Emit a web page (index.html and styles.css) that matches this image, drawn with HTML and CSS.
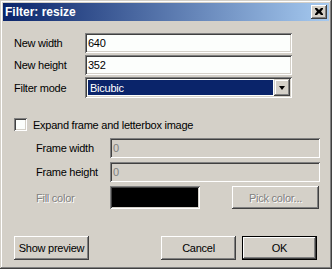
FILE: index.html
```html
<!DOCTYPE html>
<html>
<head>
<meta charset="utf-8">
<link rel="stylesheet" href="styles.css">
</head>
<body>
<div class="window">
  <div class="titlebar">
    <span class="title">Filter: resize</span>
    <div class="close-btn">
      <svg width="8" height="7" viewBox="0 0 8 7"><path d="M0 0h2l2 2 2-2h2v1l-2 2.5 2 2.5v1H6L4 5 2 7H0V6l2-2.5L0 1z" fill="#000"/></svg>
    </div>
  </div>
  <div class="content">
    <div class="row">
      <span class="label">New width</span>
      <div class="edit">640</div>
    </div>
    <div class="row">
      <span class="label">New height</span>
      <div class="edit">352</div>
    </div>
    <div class="row row-combo">
      <span class="label">Filter mode</span>
      <div class="combo">
        <div class="combo-sel">Bicubic</div>
        <div class="combo-btn"><span class="arrow"></span></div>
      </div>
    </div>
    <div class="check-row">
      <span class="checkbox"></span>
      <span>Expand frame and letterbox image</span>
    </div>
    <div class="sub">
      <div class="row">
        <span class="label sublabel">Frame width</span>
        <div class="edit edit-dis">0</div>
      </div>
      <div class="row">
        <span class="label sublabel">Frame height</span>
        <div class="edit edit-dis">0</div>
      </div>
      <div class="row row-fill">
        <span class="label sublabel dis-text">Fill color</span>
        <div class="swatch"></div>
        <div class="button btn-pick dis-text">Pick color...</div>
      </div>
    </div>
    <div class="footer">
      <div class="button">Show preview</div>
      <div class="spacer"></div>
      <div class="button">Cancel</div>
      <div class="button btn-default">OK</div>
    </div>
  </div>
</div>
</body>
</html>
```
FILE: styles.css
```css
html, body {
  margin: 0;
  padding: 0;
  background: #d4d0c8;
}
body {
  font-family: "Liberation Sans", Arial, sans-serif;
  font-size: 11px;
  letter-spacing: -0.25px;
  color: #000;
}
.window {
  width: 332px;
  height: 269px;
  box-sizing: border-box;
  padding: 3px;
  background: #d4d0c8;
  box-shadow: inset -1px -1px #404040, inset 1px 1px #d4d0c8, inset -2px -2px #808080, inset 2px 2px #fff;
  display: flex;
  flex-direction: column;
}
.titlebar {
  height: 18px;
  background: linear-gradient(to right, #0a246a, #a6caf0);
  display: flex;
  align-items: center;
  padding: 0 2px 0 2px;
}
.title {
  color: #fff;
  font-weight: bold;
  font-size: 12px;
  letter-spacing: 0;
  flex: 1;
}
.close-btn {
  width: 16px;
  height: 14px;
  box-sizing: border-box;
  background: #d4d0c8;
  box-shadow: inset -1px -1px #404040, inset 1px 1px #fff, inset -2px -2px #808080, inset 2px 2px #d4d0c8;
  display: flex;
  align-items: center;
  justify-content: center;
  padding: 0 1px 1px 0;
}
.close-btn svg { display: block; }
.content {
  padding: 12px 0 0 11px;
  display: flex;
  flex-direction: column;
}
.row {
  display: flex;
  align-items: center;
  height: 20px;
  margin-bottom: 2px;
}
.label {
  width: 71px;
  flex: none;
}
.edit {
  width: 207px;
  height: 20px;
  box-sizing: border-box;
  background: #fcfefc;
  box-shadow: inset 1px 1px #808080, inset -1px -1px #fff, inset 2px 2px #404040, inset -2px -2px #d4d0c8;
  padding: 0 3px;
  display: flex;
  align-items: center;
}
.row-combo { height: 21px; margin-bottom: 0; }
.combo {
  width: 207px;
  height: 21px;
  box-sizing: border-box;
  background: #fcfefc;
  box-shadow: inset 1px 1px #808080, inset -1px -1px #fff, inset 2px 2px #404040, inset -2px -2px #d4d0c8;
  padding: 2px;
  display: flex;
}
.combo-sel {
  flex: 1;
  margin: 1px;
  background: #0a246a;
  color: #fff;
  padding-left: 2px;
  display: flex;
  align-items: center;
}
.combo-btn {
  width: 16px;
  flex: none;
  box-sizing: border-box;
  background: #d4d0c8;
  box-shadow: inset -1px -1px #404040, inset 1px 1px #d4d0c8, inset -2px -2px #808080, inset 2px 2px #fff;
  display: flex;
  align-items: center;
  justify-content: center;
}
.arrow {
  width: 0;
  height: 0;
  border-left: 3.5px solid transparent;
  border-right: 3.5px solid transparent;
  border-top: 4px solid #000;
  margin-top: 1px;
}
.check-row {
  display: flex;
  align-items: center;
  margin-top: 20px;
  height: 13px;
}
.checkbox {
  width: 13px;
  height: 13px;
  box-sizing: border-box;
  background: #fcfefc;
  box-shadow: inset 1px 1px #808080, inset -1px -1px #fff, inset 2px 2px #404040, inset -2px -2px #d4d0c8;
  margin-right: 6px;
  flex: none;
}
.sub {
  margin-top: 7px;
  padding-left: 22px;
}
.sub .row { margin-bottom: 4px; }
.sublabel { width: 74px; }
.edit-dis {
  width: 210px;
  background: #d4d0c8;
  color: #808080;
}
.row-fill { height: 23px; margin-bottom: 0; }
.dis-text {
  color: #808080;
  text-shadow: 1px 1px 0 #fff;
}
.swatch {
  width: 90px;
  height: 23px;
  box-sizing: border-box;
  background: #000;
  box-shadow: inset 1px 1px #808080, inset -1px -1px #fff, inset 2px 2px #404040, inset -2px -2px #d4d0c8;
  margin-right: 32px;
}
.button {
  width: 75px;
  height: 24px;
  box-sizing: border-box;
  background: #d4d0c8;
  box-shadow: inset -1px -1px #404040, inset 1px 1px #fff, inset -2px -2px #808080, inset 2px 2px #d4d0c8;
  display: flex;
  align-items: center;
  justify-content: center;
  flex: none;
}
.btn-pick {
  width: 87px;
  height: 23px;
}
.footer {
  display: flex;
  margin-top: 23px;
  width: 303px;
}
.spacer { flex: 1; }
.btn-default {
  margin-left: 6px;
  border: 1px solid #000;
  box-shadow: inset -1px -1px #404040, inset 1px 1px #fff, inset -2px -2px #808080, inset 2px 2px #d4d0c8;
}
```
